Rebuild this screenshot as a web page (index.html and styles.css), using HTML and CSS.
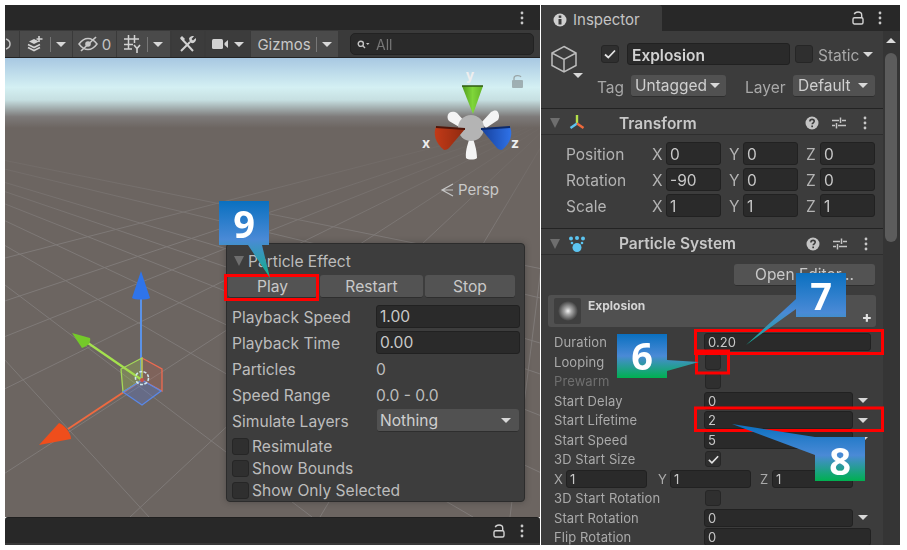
FILE: index.html
```html
<!DOCTYPE html>
<html lang="en">
<head>
<meta charset="utf-8">
<title>Unity Particle Effect</title>
<link rel="stylesheet" href="styles.css">
</head>
<body>
<svg width="0" height="0" class="defs">
  <defs>
    <symbol id="i-help" viewBox="0 0 14 14"><circle cx="7" cy="7" r="6.5" fill="#c4c4c4"/><path d="M4.9 5.4c0-1.3 1-2 2.2-2s2.1.8 2.1 1.9c0 1.500-2 1.500-2 3" fill="none" stroke="#3c3c3c" stroke-width="1.600"/><rect x="6.300" y="9.500" width="1.700" height="1.700" fill="#3c3c3c"/></symbol>
    <symbol id="i-sliders" viewBox="0 0 14 14"><path d="M0 4.500h7M10 4.500h4M8.500 1.500v5.500M0 9.500h3M6 9.500h8M4.500 7v5.500" stroke="#c4c4c4" stroke-width="1.500" fill="none"/></symbol>
    <symbol id="i-dots" viewBox="0 0 4 14"><circle cx="2" cy="2" r="1.400" fill="#c8c8c8"/><circle cx="2" cy="7" r="1.400" fill="#c8c8c8"/><circle cx="2" cy="12" r="1.400" fill="#c8c8c8"/></symbol>
    <symbol id="i-lock" viewBox="0 0 12 14"><path d="M2.300 3.300C2.800 1.700 4.300 1 6 1c2.200 0 3.700 1.200 3.700 3v3" fill="none" stroke="#d2d2d2" stroke-width="1.400"/><rect x="1" y="6.800" width="10" height="6.200" rx="1.500" fill="none" stroke="#d2d2d2" stroke-width="1.400"/></symbol>
    <symbol id="i-check" viewBox="0 0 14 14"><path d="M2 7.500l3.300 3L12 3.500" fill="none" stroke="#e2e2e2" stroke-width="1.800"/></symbol>
    <linearGradient id="sky" x1="0" y1="0" x2="0" y2="1">
      <stop offset="0" stop-color="#a8c8e2"/>
      <stop offset=".42" stop-color="#d4f0f3"/>
      <stop offset=".6" stop-color="#c6dfe1"/>
      <stop offset=".84" stop-color="#7d7a79"/>
      <stop offset="1" stop-color="#6c6561"/>
    </linearGradient>
    <linearGradient id="gridfade" x1="0" y1="0" x2="0" y2="1">
      <stop offset="0" stop-color="#6c6561" stop-opacity="1"/>
      <stop offset=".35" stop-color="#6c6561" stop-opacity=".75"/>
      <stop offset="1" stop-color="#6c6561" stop-opacity="0"/>
    </linearGradient>
    <linearGradient id="gcall9" x1="0" y1="0" x2="0" y2="1">
      <stop offset="0" stop-color="#0a70c0"/><stop offset=".5" stop-color="#4a8ad6"/><stop offset="1" stop-color="#10b088"/>
    </linearGradient>
    <linearGradient id="gcall7" x1="0" y1="0" x2="0" y2="1">
      <stop offset="0" stop-color="#0a70c0"/><stop offset=".55" stop-color="#4a8ad6"/><stop offset="1" stop-color="#14a890"/>
    </linearGradient>
    <linearGradient id="gcall6" x1="0" y1="0" x2="0" y2="1">
      <stop offset="0" stop-color="#0a70c0"/><stop offset=".5" stop-color="#4a8ad6"/><stop offset="1" stop-color="#00b050"/>
    </linearGradient>
    <linearGradient id="gcall8" x1="0" y1="0" x2="0" y2="1">
      <stop offset="0" stop-color="#0a70c0"/><stop offset=".55" stop-color="#4a8ad6"/><stop offset="1" stop-color="#00b050"/>
    </linearGradient>
    <linearGradient id="gy" x1="0" y1="0" x2="1" y2="0"><stop offset="0" stop-color="#4f9a1e"/><stop offset=".5" stop-color="#7fd63a"/><stop offset="1" stop-color="#64b428"/></linearGradient>
    <linearGradient id="gx" x1="0" y1="0" x2="1" y2="0"><stop offset="0" stop-color="#c23a18"/><stop offset="1" stop-color="#8f2a10"/></linearGradient>
    <linearGradient id="gz" x1="0" y1="0" x2="1" y2="0"><stop offset="0" stop-color="#16409c"/><stop offset="1" stop-color="#2f72e8"/></linearGradient>
    <radialGradient id="gthumb"><stop offset="0" stop-color="#f2f2f2"/><stop offset=".35" stop-color="#a8a8a8"/><stop offset="1" stop-color="#3f3f3f"/></radialGradient>
  </defs>
</svg>

<main class="app">
  <section class="scene-col">
    <div class="topbar">
      <svg class="dots"><use href="#i-dots"/></svg>
    </div>
    <div class="toolbar">
      <div class="tbtn tbtn-1"><svg class="ic" width="8" height="14" viewBox="0 0 8 14"><path d="M1 2c3 1 4 3 4 5s-1 4-4 5" fill="none" stroke="#c4c4c4" stroke-width="1.500"/></svg></div>
      <div class="tbtn tbtn-2">
        <svg width="18" height="18" viewBox="0 0 18 18"><path d="M1 9.500l6 3 6-3M1 12.500l6 3 6-3" fill="none" stroke="#d2d2d2" stroke-width="1.600"/><path d="M2 6.500L7 4l5 2.500-5 2.500z" fill="#d2d2d2"/><path d="M12 1v6M9.500 4h6" stroke="#d2d2d2" stroke-width="1.600"/></svg>
        <i class="sep"></i><i class="caret"></i>
      </div>
      <div class="tbtn tbtn-3">
        <svg width="22" height="16" viewBox="0 0 22 16"><path d="M1 8c3-4 6-5.500 9-5.500s6 1.500 9 5.500c-3 4-6 5.500-9 5.500S4 12 1 8z" fill="none" stroke="#c8c8c8" stroke-width="1.500"/><circle cx="10" cy="8" r="2.800" fill="#c8c8c8"/><path d="M3 15L18 1" stroke="#c8c8c8" stroke-width="1.700"/></svg>
        <span class="tnum">0</span>
      </div>
      <div class="tbtn tbtn-4">
        <svg width="18" height="18" viewBox="0 0 18 18"><path d="M4.500 0v14M10.500 0v8M0 4h15M0 9.500h9M0 14h8" stroke="#d2d2d2" stroke-width="1.500" fill="none"/><path d="M10 10l3 3.500 3-3.500M13 13.500V18" stroke="#d2d2d2" stroke-width="1.600" fill="none"/></svg>
        <i class="sep"></i><i class="caret"></i>
      </div>
      <div class="tbtn tbtn-5">
        <svg width="18" height="18" viewBox="0 0 18 18"><path d="M2 3l12 13" stroke="#d2d2d2" stroke-width="2"/><path d="M3 1l3 3-2 2-3-3z" fill="#d2d2d2"/><path d="M2 16L11 7" stroke="#d2d2d2" stroke-width="2"/><path d="M10 3.500c.800-2 3-3 5-2.200L12.500 4l1.500 1.500L16.800 3c.700 2-.300 4-2.300 5-1.500.500-3-.300-3.500-.800z" fill="#d2d2d2"/></svg>
      </div>
      <div class="tbtn tbtn-6">
        <svg width="17" height="12" viewBox="0 0 17 12"><rect x="0" y="1" width="11" height="10" rx="1.500" fill="#d2d2d2"/><path d="M12.500 5l3.500-3v8l-3.500-3z" fill="#d2d2d2"/></svg>
        <i class="caret caret-gap"></i>
      </div>
      <div class="tbtn tbtn-7"><span class="tlabel">Gizmos</span><i class="sep"></i><i class="caret"></i></div>
      <div class="search">
        <svg width="13" height="9" viewBox="0 0 13 9"><circle cx="3.800" cy="3.800" r="2.600" fill="none" stroke="#c4c4c4" stroke-width="1.400"/><path d="M5.800 5.800L8 8" stroke="#c4c4c4" stroke-width="1.400"/><path d="M9 3h3.500l-1.700 2z" fill="#c4c4c4"/></svg>
        <span>All</span>
      </div>
    </div>

    <div class="scene">
      <svg class="scene-art" viewBox="5 58 535 459" width="535" height="459">
        <rect x="5" y="58" width="535" height="459" fill="#6c6561"/>
        <g stroke="#7f7a78" stroke-width="1" fill="none">
          <path d="M560 115L-1000 517M560 115L-640 517M560 115L-447 517M560 115L-255 517M560 115L-63 517M560 115L130 517M560 115L320 517M560 115L510 517M560 115L700 517M560 115L890 517"/>
          <path d="M-220 115L-13 517M-220 115L149 517M-220 115L312 517M-220 115L473 517M-220 115L635 517M-220 115L797 517M-220 115L960 517M-220 115L1120 517M-220 115L1450 517M-220 115L1770 517"/>
        </g>
        <rect x="5" y="115" width="535" height="125" fill="url(#gridfade)"/>
        <rect x="5" y="58" width="535" height="70" fill="url(#sky)"/>

        <g class="gizmo-move">
          <path d="M141 380V298" stroke="#5a92e8" stroke-width="2"/>
          <path d="M141 271l9 27c-3 2-15 2-18 0z" fill="#2f74ea"/>
          <path d="M142 380L88 343" stroke="#a4e14e" stroke-width="2.200"/>
          <path d="M72 333l18 5c1 3-1 8-8 10z" fill="#74c92a"/>
          <path d="M142 380L68 429" stroke="#ee6a40" stroke-width="2"/>
          <path d="M39 445l20-22c4 1 12 9 12 16z" fill="#ef4e1c"/>
          <path d="M142 380V358L162 369V391z" fill="#b8604a" fill-opacity=".25" stroke="#ee6a50" stroke-width="1.300"/>
          <path d="M142 380V358L121 369L123 392z" fill="#a6cf4e" fill-opacity=".28" stroke="#a4d958" stroke-width="1.300"/>
          <path d="M142 380L161 391L142 405L123 392z" fill="#5b78d8" fill-opacity=".32" stroke="#5a88e6" stroke-width="1.300"/>
          <circle cx="142" cy="378" r="6.500" fill="none" stroke="#cfe8ee" stroke-width="1.600" stroke-dasharray="3 1.500"/>
          <circle cx="142" cy="380" r="2" fill="#c9504a"/>
        </g>

        <g class="gizmo-view">
          <path d="M449 113c3-2 6-1 8 0l9 10-5 5-12-7c-2-2-2-6 0-8zM497 111c2 2 3 6 1 9l-12 8-5-5 10-11c2-1 4-2 6-1zM466 158c-1-8 3-18 5-23 3 5 6 15 6 23-2 2-9 2-11 0z" fill="#f4f4f4"/>
          <circle cx="471" cy="128" r="13" fill="#b4b4b4"/>
          <path d="M462 86h21l-10 28z" fill="url(#gy)"/>
          <path d="M462 86h21" stroke="#2f5a12" stroke-width="1.500"/>
          <path d="M465 129L436 127c-3 6-1 16 8 23 2 0 4-1 5-2z" fill="url(#gx)"/>
          <path d="M465 129L436 127" stroke="#4f160a" stroke-width="1.800"/>
          <path d="M481 129L510 127c3 6 1 16-8 23-2 0-4-1-5-2z" fill="url(#gz)"/>
          <path d="M481 129L510 127" stroke="#0d2a6a" stroke-width="1.800"/>
          <text x="470" y="80" class="axis">y</text>
          <text x="426" y="148" class="axis">x</text>
          <text x="515" y="148" class="axis">z</text>
        </g>
        <g fill="#8f9b9d" fill-opacity=".75">
          <rect x="512" y="80" width="11" height="8" rx="1"/>
          <path d="M514 80v-2c0-3 6-3 7-1" fill="none" stroke="#9aa5a7" stroke-width="1.300"/>
        </g>
        <path d="M453 184l-11 6 11 6M442 190h11" fill="none" stroke="#c6c6c6" stroke-width="1.200"/>
        <text x="458" y="195" class="persp">Persp</text>
      </svg>

      <div class="fx-panel">
        <div class="fx-title"><i class="tri"></i><span>Particle Effect</span></div>
        <div class="fx-buttons">
          <button class="btn btn-play">Play</button>
          <button class="btn btn-restart">Restart</button>
          <button class="btn btn-stop">Stop</button>
        </div>
        <div class="fx-row"><span class="fx-label">Playback Speed</span><span class="field fx-field">1.00</span></div>
        <div class="fx-row"><span class="fx-label">Playback Time</span><span class="field fx-field">0.00</span></div>
        <div class="fx-row"><span class="fx-label">Particles</span><span class="fx-value">0</span></div>
        <div class="fx-row"><span class="fx-label">Speed Range</span><span class="fx-value">0.0 - 0.0</span></div>
        <div class="fx-row"><span class="fx-label">Simulate Layers</span><span class="drop fx-drop"><b>Nothing</b><i class="caret"></i></span></div>
        <div class="fx-check"><i class="cb"></i><span>Resimulate</span></div>
        <div class="fx-check"><i class="cb"></i><span>Show Bounds</span></div>
        <div class="fx-check"><i class="cb"></i><span>Show Only Selected</span></div>
      </div>
    </div>

    <div class="bottombar">
      <svg class="lock"><use href="#i-lock"/></svg>
      <svg class="dots"><use href="#i-dots"/></svg>
    </div>
  </section>

  <aside class="inspector">
    <div class="tabbar">
      <div class="tab">
        <svg width="14" height="14" viewBox="0 0 14 14"><circle cx="7" cy="7" r="6.500" fill="#d0d0d0"/><rect x="5.500" y="6" width="3" height="5.500" fill="#3c3c3c"/><rect x="5.700" y="2.500" width="2.600" height="2.400" fill="#3c3c3c"/></svg>
        <span>Inspector</span>
      </div>
      <svg class="lock"><use href="#i-lock"/></svg>
      <svg class="dots"><use href="#i-dots"/></svg>
    </div>
    <div class="insp-body">
      <div class="insp-content">
        <div class="object">
          <div class="obj-icon">
            <svg width="28" height="28" viewBox="0 0 28 28"><path d="M14 1.500L26 8v12.500L14 27 2 20.500V8zM2 8l12 6.500L26 8M14 14.500V27" fill="none" stroke="#bdbdbd" stroke-width="1.500"/></svg>
            <i class="caret obj-caret"></i>
          </div>
          <div class="obj-rows">
            <div class="obj-row1">
              <span class="cb cb-lg"><svg width="14" height="14"><use href="#i-check"/></svg></span>
              <span class="field name-field">Explosion</span>
              <i class="cb cb-lg"></i>
              <span class="static">Static</span><i class="caret"></i>
            </div>
            <div class="obj-row2">
              <span class="tag-label">Tag</span>
              <span class="drop tag-drop"><b>Untagged</b><i class="caret"></i></span>
              <span class="layer-label">Layer</span>
              <span class="drop layer-drop"><b>Default</b><i class="caret"></i></span>
            </div>
          </div>
        </div>

        <div class="comp-head">
          <i class="tri"></i>
          <svg class="comp-icon" width="18" height="18" viewBox="0 0 18 18"><path d="M9 1v8" stroke="#b4e04a" stroke-width="2.400"/><path d="M9 9.500L2.500 14" stroke="#5cc4f0" stroke-width="2.400"/><path d="M9 9.500l6.500 4.500" stroke="#ef6a3c" stroke-width="2.400"/></svg>
          <span class="comp-name">Transform</span>
          <svg class="hi"><use href="#i-help"/></svg>
          <svg class="hi hi-s"><use href="#i-sliders"/></svg>
          <svg class="hd"><use href="#i-dots"/></svg>
        </div>
        <div class="tf-rows">
          <div class="tf-row"><span class="tf-label">Position</span><span class="ax">X</span><span class="field tf-field">0</span><span class="ax">Y</span><span class="field tf-field">0</span><span class="ax">Z</span><span class="field tf-field">0</span></div>
          <div class="tf-row"><span class="tf-label">Rotation</span><span class="ax">X</span><span class="field tf-field">-90</span><span class="ax">Y</span><span class="field tf-field">0</span><span class="ax">Z</span><span class="field tf-field">0</span></div>
          <div class="tf-row"><span class="tf-label">Scale</span><span class="ax">X</span><span class="field tf-field">1</span><span class="ax">Y</span><span class="field tf-field">1</span><span class="ax">Z</span><span class="field tf-field">1</span></div>
        </div>

        <div class="comp-head comp-ps">
          <i class="tri"></i>
          <svg class="comp-icon" width="18" height="18" viewBox="0 0 18 18" fill="#5cc4f0"><circle cx="9" cy="12.500" r="4.500"/><circle cx="3" cy="3.500" r="2"/><circle cx="9" cy="3" r="2"/><circle cx="15" cy="3.500" r="2"/><circle cx="4" cy="8" r="1.300"/><circle cx="14" cy="8" r="1.300"/></svg>
          <span class="comp-name comp-name-ps">Particle System</span>
          <svg class="hi"><use href="#i-help"/></svg>
          <svg class="hi hi-s"><use href="#i-sliders"/></svg>
          <svg class="hd"><use href="#i-dots"/></svg>
        </div>
        <div class="editor-row"><button class="btn btn-editor">Open Editor...</button></div>
        <div class="ps-box">
          <div class="ps-thumb"><svg width="20" height="20"><circle cx="10" cy="10" r="10" fill="url(#gthumb)"/></svg></div>
          <span class="ps-title">Explosion</span>
          <span class="ps-plus">+</span>
        </div>
        <div class="ps-rows">
          <div class="ps-row"><span class="ps-label">Duration</span><span class="field ps-wide">0.20</span></div>
          <div class="ps-row"><span class="ps-label">Looping</span><i class="cb cb-sm"></i></div>
          <div class="ps-row"><span class="ps-label dim">Prewarm</span><i class="cb cb-sm"></i></div>
          <div class="ps-row"><span class="ps-label">Start Delay</span><span class="field ps-field">0</span><i class="caret ps-caret"></i></div>
          <div class="ps-row"><span class="ps-label">Start Lifetime</span><span class="field ps-field">2</span><i class="caret ps-caret"></i></div>
          <div class="ps-row"><span class="ps-label">Start Speed</span><span class="field ps-field">5</span><i class="caret ps-caret"></i></div>
          <div class="ps-row"><span class="ps-label">3D Start Size</span><span class="cb cb-sm"><svg width="13" height="13"><use href="#i-check"/></svg></span></div>
          <div class="ps-row ps-xyz">
            <span class="ps-ax">X</span><span class="field ps-xf">1</span>
            <span class="ps-ax ps-ax-y">Y</span><span class="field ps-xf">1</span>
            <span class="ps-ax ps-ax-z">Z</span><span class="field ps-xf">1</span>
          </div>
          <div class="ps-row"><span class="ps-label">3D Start Rotation</span><i class="cb cb-sm"></i></div>
          <div class="ps-row"><span class="ps-label">Start Rotation</span><span class="field ps-field">0</span><i class="caret ps-caret"></i></div>
          <div class="ps-row"><span class="ps-label">Flip Rotation</span><span class="field ps-wide">0</span></div>
        </div>
      </div>
      <div class="scrollbar"><i class="sb-up"></i><i class="sb-thumb"></i></div>
    </div>
  </aside>
</main>

<svg class="annotations" viewBox="0 0 907 550" width="907" height="550">
  <g class="redbox">
    <rect x="225.500" y="275.500" width="92" height="24"/>
    <rect x="695.500" y="330.500" width="187" height="23"/>
    <rect x="696.500" y="351" width="32" height="22"/>
    <rect x="695.500" y="408" width="187" height="22.500"/>
  </g>
  <polygon points="219,201 269,201 269,245 262,245 270,278 248,245 219,245" fill="url(#gcall9)"/>
  <polygon points="796,273 846,273 846,317 796,317 796,309 746,345 796,299" fill="url(#gcall7)"/>
  <polygon points="617,334 667,334 667,360 699,362 667,371 667,378 617,378" fill="url(#gcall6)"/>
  <polygon points="815,437 865,437 865,481 815,481 815,455 732,424" fill="url(#gcall8)"/>
  <text x="244" y="238" class="digit">9</text>
  <text x="821" y="310" class="digit">7</text>
  <text x="642" y="370" class="digit">6</text>
  <text x="840" y="475" class="digit">8</text>
</svg>
</body>
</html>
```

FILE: styles.css
```css
* { box-sizing: border-box; }
html, body { margin: 0; padding: 0; }
body {
  width: 907px;
  height: 550px;
  overflow: hidden;
  background: #fff;
  position: relative;
  font-family: Inter, "Noto Sans", "Liberation Sans", sans-serif;
  font-size: 16px;
  color: #c4c4c4;
}
.defs { position: absolute; }
i { display: block; font-style: normal; }

.app {
  display: flex;
  gap: 1px;
  height: 550px;
  padding: 5px 7px 5px 5px;
  filter: blur(.45px);
}

/* left column */
.scene-col { width: 535px; display: flex; flex-direction: column; }
.topbar {
  height: 25px;
  background: #282828;
  display: flex;
  align-items: center;
  justify-content: flex-end;
  padding-right: 16px;
  flex: none;
}
.dots { width: 4px; height: 14px; flex: none; }
.lock { width: 12px; height: 14px; flex: none; }

.toolbar {
  height: 28px;
  flex: none;
  background: #3a3a3a;
  display: flex;
  align-items: flex-end;
  gap: 1px;
  border-bottom: 1px solid #232323;
}
.tbtn {
  height: 26px;
  background: #4a4a4a;
  display: flex;
  align-items: center;
  justify-content: center;
  gap: 5px;
  flex: none;
}
.tbtn-1 { width: 14px; justify-content: flex-start; background: #474747; }
.tbtn-2 { width: 52px; }
.tbtn-3 { width: 43px; gap: 2px; }
.tbtn-4 { width: 53px; }
.tbtn-5 { width: 32px; margin-left: 1px; background: #3c3c3c; }
.tbtn-6 { width: 44px; margin-left: 1px; background: #3c3c3c; gap: 3px; }
.tbtn-7 { width: 87px; gap: 5px; }
.tnum { font-size: 15px; color: #c4c4c4; }
.tlabel { font-size: 15px; color: #c8c8c8; }
.sep { width: 1px; height: 15px; background: #777; }
.caret {
  width: 0;
  height: 0;
  border-left: 5px solid transparent;
  border-right: 5px solid transparent;
  border-top: 5px solid #d8d8d8;
  flex: none;
}
.caret-gap { margin-left: 2px; }
.search {
  width: 184px;
  height: 22px;
  margin: 0 0 2px 11px;
  background: #2a2a2a;
  border: 1px solid #222;
  border-radius: 5px;
  display: flex;
  align-items: center;
  gap: 6px;
  padding-left: 6px;
  font-size: 14px;
  color: #777;
}

/* scene */
.scene { flex: 1; position: relative; min-height: 0; overflow: hidden; background: #6c6561; }
.scene-art { display: block; }
.axis { font: 700 14px Inter, sans-serif; fill: #eee; text-anchor: middle; }
.persp { font: 400 15px Inter, sans-serif; fill: #c9c9c9; }

.bottombar {
  height: 28px;
  flex: none;
  background: #282828;
  border-top: 1px solid #1f1f1f;
  border-bottom: 2px solid #383838;
  border-radius: 3px 3px 0 0;
  display: flex;
  align-items: center;
  justify-content: flex-end;
  gap: 15px;
  padding-right: 16px;
}

/* floating panel */
.fx-panel {
  position: absolute;
  left: 221px;
  top: 185px;
  width: 299px;
  height: 259px;
  background: #3d3d3d;
  border: 1px solid #2c2c2c;
  border-radius: 4px;
  box-shadow: 0 0 6px rgba(30, 30, 30, .35);
  padding: 7px 4px 0 4px;
  font-size: 15.600px;
  color: #bcbcbc;
}
.fx-title { height: 20px; display: flex; align-items: center; gap: 4px; padding-left: 3px; }
.tri {
  width: 0;
  height: 0;
  border-left: 5.500px solid transparent;
  border-right: 5.500px solid transparent;
  border-top: 10px solid #6e6e6e;
  flex: none;
}
.fx-buttons { display: flex; margin: 4px 0 7px 0; height: 23px; gap: 2px; }
.btn {
  font: inherit;
  color: #c8c8c8;
  background: #535353;
  border: 0;
  border-bottom: 1px solid #2e2e2e;
  border-radius: 3px;
  padding: 0;
  height: 23px;
}
.btn-play { width: 89px; margin: 0 1px 0 -3px; }
.btn-restart { width: 103px; }
.btn-stop { width: 90px; }
.fx-row { display: flex; align-items: center; height: 23px; margin-bottom: 3px; padding-left: 1px; }
.fx-label { width: 144px; flex: none; padding-top: 1px; }
.fx-value { padding-top: 1px; }
.field {
  background: #2a2a2a;
  border: 1px solid #212121;
  border-radius: 3px;
  color: #c8c8c8;
  display: flex;
  align-items: center;
  padding-left: 3px;
  flex: none;
}
.fx-field { width: 144px; height: 23px; }
.drop {
  background: #515151;
  border-radius: 3px;
  border-bottom: 1px solid #2e2e2e;
  display: flex;
  align-items: center;
  justify-content: space-between;
  color: #cfcfcf;
  flex: none;
}
.drop b { font-weight: 400; }
.fx-drop { width: 142px; height: 23px; padding: 0 8px 0 3px; margin-left: 1px; }
.fx-check { display: flex; align-items: center; height: 22px; gap: 3px; padding-left: 1px; }
.cb {
  width: 17px;
  height: 17px;
  background: #2f2f2f;
  border: 1px solid #262626;
  border-radius: 3px;
  flex: none;
  display: flex;
  align-items: center;
  justify-content: center;
}

/* inspector */
.inspector {
  width: 359px;
  background: #3c3c3c;
  display: flex;
  flex-direction: column;
  overflow: hidden;
}
.tabbar {
  height: 26px;
  flex: none;
  background: #282828;
  display: flex;
  align-items: center;
  gap: 14px;
  padding-right: 18px;
}
.tab {
  width: 121px;
  height: 26px;
  background: #3c3c3c;
  border-radius: 3px 3px 0 0;
  display: flex;
  align-items: center;
  gap: 6px;
  padding: 3px 0 0 12px;
  margin-right: auto;
  font-size: 15px;
}
.insp-body { flex: 1; display: flex; min-height: 0; }
.insp-content { width: 342px; flex: none; overflow: hidden; }
.scrollbar {
  width: 17px;
  flex: none;
  background: #353535;
  padding: 7px 3px 0 2px;
  display: flex;
  flex-direction: column;
  align-items: center;
}
.sb-up {
  width: 0;
  height: 0;
  border-left: 5px solid transparent;
  border-right: 5px solid transparent;
  border-bottom: 5px solid #dcdcdc;
}
.sb-thumb {
  width: 12px;
  height: 189px;
  margin-top: 10px;
  background: #5c5c5c;
  border-radius: 6px;
}

.object { height: 77px; display: flex; padding: 12px 0 0 9px; }
.obj-icon { width: 44px; flex: none; position: relative; padding-top: 2px; }
.obj-caret { position: absolute; left: 23px; top: 30px; }
.obj-rows { display: flex; flex-direction: column; gap: 10px; }
.obj-row1 { display: flex; align-items: center; height: 22px; padding-left: 7px; gap: 5px; }
.cb-lg { width: 18px; height: 18px; }
.name-field {
  width: 163px;
  height: 22px;
  margin-left: 3px;
  padding: 2px 0 0 4px;
  font-weight: 600;
  font-size: 15.500px;
  color: #d2d2d2;
}
.static { font-size: 15.500px; color: #a8a8a8; margin-right: -1px; padding-top: 2px; }
.obj-row2 { display: flex; align-items: center; height: 22px; padding-left: 3px; font-size: 15.500px; }
.tag-label { width: 34px; color: #a8a8a8; padding-top: 2px; }
.tag-drop { width: 95px; height: 22px; padding: 0 6px 0 4px; }
.layer-label { width: 48px; margin-left: 19px; color: #a8a8a8; padding-top: 2px; }
.layer-drop { width: 82px; height: 22px; padding: 0 7px 0 5px; }

.comp-head {
  height: 27px;
  display: flex;
  align-items: center;
  background: #3e3e3e;
  border-top: 1px solid #232323;
  border-bottom: 1px solid #2e2e2e;
  padding: 3px 0 0 9px;
}
.comp-icon { margin-left: 8px; flex: none; }
.comp-name {
  font-weight: 600;
  font-size: 15.500px;
  color: #c8c8c8;
  margin-left: 33px;
  width: 186px;
  flex: none;
}
.hi { width: 14px; height: 14px; flex: none; }
.hi-s { margin-left: 13px; }
.hd { width: 4px; height: 14px; margin-left: 17px; flex: none; }

.tf-rows { display: flex; flex-direction: column; gap: 3px; padding: 7px 0 0 25px; height: 93px; }
.tf-row { display: flex; align-items: center; height: 23px; font-size: 15.500px; color: #b4b4b4; }
.tf-label { width: 86px; flex: none; padding-top: 1px; }
.ax { width: 14px; flex: none; padding-top: 1px; }
.ax + .field + .ax { margin-left: 8px; }
.tf-field { width: 55px; height: 23px; padding-top: 1px; }

.comp-ps { padding-top: 4px; }
.comp-name-ps { width: 187px; margin-left: 33px; }
.editor-row { height: 40px; display: flex; justify-content: flex-end; padding: 9px 8px 0 0; }
.btn-editor { width: 141px; height: 22px; font-size: 15.500px; }
.ps-box {
  height: 32px;
  margin: 0 7px 0 7px;
  background: #505050;
  border-radius: 3px;
  position: relative;
  display: flex;
  padding: 3px 0 0 6px;
  gap: 7px;
}
.ps-thumb {
  width: 27px;
  height: 26px;
  background: #3f3f3f;
  border-radius: 2px;
  display: flex;
  align-items: center;
  justify-content: center;
}
.ps-title { font-size: 12px; font-weight: 700; color: #d4d4d4; line-height: 16px; }
.ps-plus { position: absolute; right: 4px; bottom: 2px; font-size: 15px; font-weight: 800; color: #e0e0e0; line-height: 14px; }
.ps-rows { padding: 5.500px 0 0 13px; font-size: 13px; color: #aaa; letter-spacing: .1px; }
.ps-row { height: 19.500px; display: flex; align-items: center; }
.ps-label { width: 150px; flex: none; }
.dim { color: #6f6f6f; }
.ps-wide { width: 167px; height: 18px; font-size: 13px; }
.ps-field { width: 149px; height: 18px; font-size: 13px; }
.ps-caret { margin-left: 5px; }
.cb-sm { width: 16px; height: 16px; margin-left: 1px; }
.ps-ax { width: 12px; flex: none; }
.ps-ax-y { margin-left: 11px; }
.ps-ax-z { margin-left: 9px; }
.ps-xf { width: 81px; height: 18px; }

/* annotations */
.annotations { position: absolute; left: 0; top: 0; pointer-events: none; }
.redbox rect { fill: none; stroke: #ff0000; stroke-width: 3; }
.digit {
  font: 700 38px "Open Sans", sans-serif;
  fill: #fff;
  text-anchor: middle;
}
```
